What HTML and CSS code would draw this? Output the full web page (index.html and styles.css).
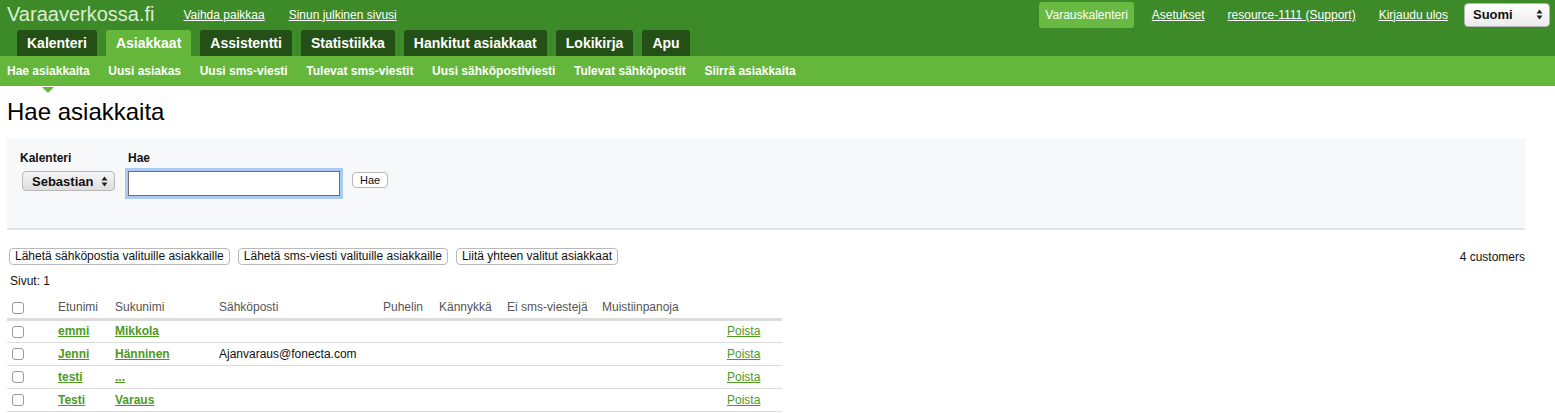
FILE: index.html
```html
<!DOCTYPE html>
<html lang="fi">
<head>
<meta charset="utf-8">
<title>Hae asiakkaita</title>
<link rel="stylesheet" href="styles.css">
</head>
<body>
<header class="header">
  <div class="topbar">
    <div class="topbar-left">
      <span class="logo">Varaaverkossa.fi</span>
      <a class="toplink" href="#">Vaihda paikkaa</a>
      <a class="toplink" href="#">Sinun julkinen sivusi</a>
    </div>
    <div class="topbar-right">
      <a class="toplink toplink-active" href="#">Varauskalenteri</a>
      <a class="toplink toplink-after" href="#">Asetukset</a>
      <a class="toplink" href="#">resource-1111 (Support)</a>
      <a class="toplink" href="#">Kirjaudu ulos</a>
      <div class="lang-select"><span>Suomi</span><span class="updown"><svg width="7" height="11" viewBox="0 0 7 11"><path d="M3.5 0.5 L6.5 4.5 L0.5 4.5 Z M3.5 10.5 L6.5 6.5 L0.5 6.5 Z" fill="#222"/></svg></span></div>
    </div>
  </div>
  <nav class="tabs">
    <a class="tab" href="#">Kalenteri</a>
    <a class="tab tab-active" href="#">Asiakkaat</a>
    <a class="tab" href="#">Assistentti</a>
    <a class="tab" href="#">Statistiikka</a>
    <a class="tab" href="#">Hankitut asiakkaat</a>
    <a class="tab" href="#">Lokikirja</a>
    <a class="tab" href="#">Apu</a>
  </nav>
</header>
<nav class="subnav">
  <a class="subitem subitem-active" href="#">Hae asiakkaita</a>
  <a class="subitem" href="#">Uusi asiakas</a>
  <a class="subitem" href="#">Uusi sms-viesti</a>
  <a class="subitem" href="#">Tulevat sms-viestit</a>
  <a class="subitem" href="#">Uusi sähköpostiviesti</a>
  <a class="subitem" href="#">Tulevat sähköpostit</a>
  <a class="subitem" href="#">Siirrä asiakkaita</a>
</nav>
<main class="content">
  <h1 class="title">Hae asiakkaita</h1>
  <section class="searchbox">
    <div class="field">
      <label class="field-label">Kalenteri</label>
      <div class="select-cal"><span>Sebastian</span><span class="updown"><svg width="7" height="11" viewBox="0 0 7 11"><path d="M3.5 0.5 L6.5 4.5 L0.5 4.5 Z M3.5 10.5 L6.5 6.5 L0.5 6.5 Z" fill="#222"/></svg></span></div>
    </div>
    <div class="field">
      <label class="field-label">Hae</label>
      <div class="field-row">
        <input class="search-input" type="text">
        <button class="btn btn-small">Hae</button>
      </div>
    </div>
  </section>
  <div class="actions">
    <div class="action-buttons">
      <button class="btn">Lähetä sähköpostia valituille asiakkaille</button>
      <button class="btn">Lähetä sms-viesti valituille asiakkaille</button>
      <button class="btn">Liitä yhteen valitut asiakkaat</button>
    </div>
    <span class="count">4 customers</span>
  </div>
  <div class="pages">Sivut: 1</div>
  <table class="customers">
    <colgroup>
      <col class="c-check"><col class="c-first"><col class="c-last"><col class="c-mail"><col class="c-phone"><col class="c-mobile"><col class="c-nosms"><col class="c-notes"><col class="c-del">
    </colgroup>
    <thead>
      <tr>
        <th class="check-cell"><span class="cb"></span></th>
        <th>Etunimi</th><th>Sukunimi</th><th>Sähköposti</th><th>Puhelin</th><th>Kännykkä</th><th>Ei sms-viestejä</th><th>Muistiinpanoja</th><th></th>
      </tr>
    </thead>
    <tbody>
      <tr>
        <td class="check-cell"><span class="cb"></span></td>
        <td><a class="name" href="#">emmi</a></td><td><a class="name" href="#">Mikkola</a></td><td></td><td></td><td></td><td></td><td></td><td><a class="del" href="#">Poista</a></td>
      </tr>
      <tr>
        <td class="check-cell"><span class="cb"></span></td>
        <td><a class="name" href="#">Jenni</a></td><td><a class="name" href="#">Hänninen</a></td><td>Ajanvaraus@fonecta.com</td><td></td><td></td><td></td><td></td><td><a class="del" href="#">Poista</a></td>
      </tr>
      <tr>
        <td class="check-cell"><span class="cb"></span></td>
        <td><a class="name" href="#">testi</a></td><td><a class="name" href="#">...</a></td><td></td><td></td><td></td><td></td><td></td><td><a class="del" href="#">Poista</a></td>
      </tr>
      <tr>
        <td class="check-cell"><span class="cb"></span></td>
        <td><a class="name" href="#">Testi</a></td><td><a class="name" href="#">Varaus</a></td><td></td><td></td><td></td><td></td><td></td><td><a class="del" href="#">Poista</a></td>
      </tr>
    </tbody>
  </table>
</main>
</body>
</html>
```
FILE: styles.css
```css
* { box-sizing: border-box; }
body {
  margin: 0;
  font-family: "Liberation Sans", Arial, Helvetica, sans-serif;
  font-size: 12px;
  color: #111;
  background: #fff;
}
a { color: inherit; }

.header { background: #3d8a28; }
.topbar {
  height: 29px;
  display: flex;
  justify-content: space-between;
  align-items: center;
  padding: 0 5px 0 7px;
}
.topbar-left, .topbar-right { display: flex; align-items: center; }
.logo {
  font-size: 20px;
  color: #dcefd3;
  margin-right: 29px;
}
.toplink {
  color: #fff;
  font-size: 12px;
  text-decoration: underline;
  margin-right: 24px;
}
.topbar-right .toplink { margin-right: 0; margin-left: 23px; }
.topbar-right .toplink-active {
  text-decoration: none;
  background: #68ba42;
  border-radius: 3px;
  padding: 6px 6px;
  margin-left: 0;
}
.topbar-right .toplink-after { margin-left: 18px; }
.lang-select {
  margin-left: 16px;
  width: 86px;
  height: 24px;
  border-radius: 4px;
  background: linear-gradient(#ffffff, #ececec);
  border: 1px solid #b5b5b5;
  display: flex;
  align-items: center;
  justify-content: space-between;
  padding: 0 6px 0 8px;
  font-size: 13px;
  font-weight: bold;
  color: #111;
}
.updown { display: flex; align-items: center; }

.tabs {
  display: flex;
  gap: 9px;
  padding-left: 17px;
  height: 27px;
  padding-top: 1px;
}
.tab {
  display: flex;
  align-items: center;
  padding: 0 10px;
  background: #244f17;
  color: #fff;
  font-size: 14px;
  font-weight: bold;
  text-decoration: none;
  border-radius: 3px 3px 0 0;
}
.tab-active { background: #64b73b; }

.subnav {
  background: #64b73b;
  height: 30px;
  display: flex;
  align-items: center;
  padding-left: 7px;
  gap: 18.6px;
}
.subitem {
  color: #fff;
  font-weight: bold;
  font-size: 12px;
  text-decoration: none;
  position: relative;
}
.subitem-active::after {
  content: "";
  position: absolute;
  left: 50%;
  margin-left: -6px;
  top: 23px;
  border-left: 6px solid transparent;
  border-right: 6px solid transparent;
  border-top: 6px solid #64b73b;
}

.content { padding: 0 30px 0 7px; }
.title {
  font-size: 24px;
  font-weight: normal;
  margin: 11px 0 0;
  line-height: 30px;
  color: #000;
}
.searchbox {
  margin-top: 11px;
  background: #f7f8fa;
  border-bottom: 2px solid #e2e3e5;
  height: 92px;
  padding: 13px 13px 0;
  display: flex;
  gap: 13px;
}
.field { display: flex; flex-direction: column; }
.field-label {
  font-weight: bold;
  font-size: 12px;
  line-height: 14px;
  margin-bottom: 6px;
  color: #111;
}
.select-cal {
  margin-left: 2px;
  width: 93px;
  height: 20px;
  border: 1px solid #b8b8b8;
  border-radius: 4px;
  background: linear-gradient(#f6f6f6, #dedede);
  display: flex;
  align-items: center;
  justify-content: space-between;
  padding: 0 6px 0 9px;
  font-size: 13px;
  font-weight: bold;
}
.field-row { display: flex; align-items: flex-start; gap: 12px; }
.search-input {
  width: 212px;
  height: 25px;
  border: 1px solid #6d6d6d;
  outline: 3px solid #a9cbf3;
  outline-offset: 0;
  background: #fff;
  margin: 0;
}
.btn {
  font-family: "Liberation Sans", Arial, sans-serif;
  font-size: 12px;
  height: 17px;
  line-height: 15px;
  padding: 0 5px;
  background: #fff;
  border: 1px solid #b9b9b9;
  border-radius: 4px;
  color: #111;
  margin: 0;
}
.btn-small { margin-top: 1px; height: 16px; padding: 0 7px; font-size: 11px; }

.actions {
  margin-top: 18px;
  display: flex;
  justify-content: space-between;
  align-items: center;
  padding-left: 2px;
}
.action-buttons { display: flex; gap: 8px; }
.count { font-size: 12px; color: #111; }
.pages { margin-top: 9px; padding-left: 3px; font-size: 12px; line-height: 14px; }

.customers {
  margin-top: 8px;
  width: 775px;
  table-layout: fixed;
  border-collapse: collapse;
  font-size: 12px;
}
.c-check { width: 47px; }
.c-first { width: 57px; }
.c-last { width: 104px; }
.c-mail { width: 164px; }
.c-phone { width: 56px; }
.c-mobile { width: 68px; }
.c-nosms { width: 95px; }
.c-notes { width: 125px; }
.c-del { width: 59px; }
.customers th {
  text-align: left;
  font-weight: normal;
  color: #555;
  height: 23px;
  padding: 0 0 0 4px;
  border-bottom: 3px solid #dcdcdc;
  white-space: nowrap;
}
.customers td {
  height: 23px;
  padding: 0 0 0 4px;
  border-bottom: 1px solid #dcdcdc;
  white-space: nowrap;
}
.customers .check-cell { padding-left: 5px; }
.cb {
  display: inline-block;
  width: 12px;
  height: 12px;
  border: 1px solid #9a9a9a;
  border-radius: 3px;
  background: #fff;
  vertical-align: middle;
}
.name { color: #4c9a1f; font-weight: bold; text-decoration: underline; }
.del { color: #4c9a1f; text-decoration: underline; }
```
